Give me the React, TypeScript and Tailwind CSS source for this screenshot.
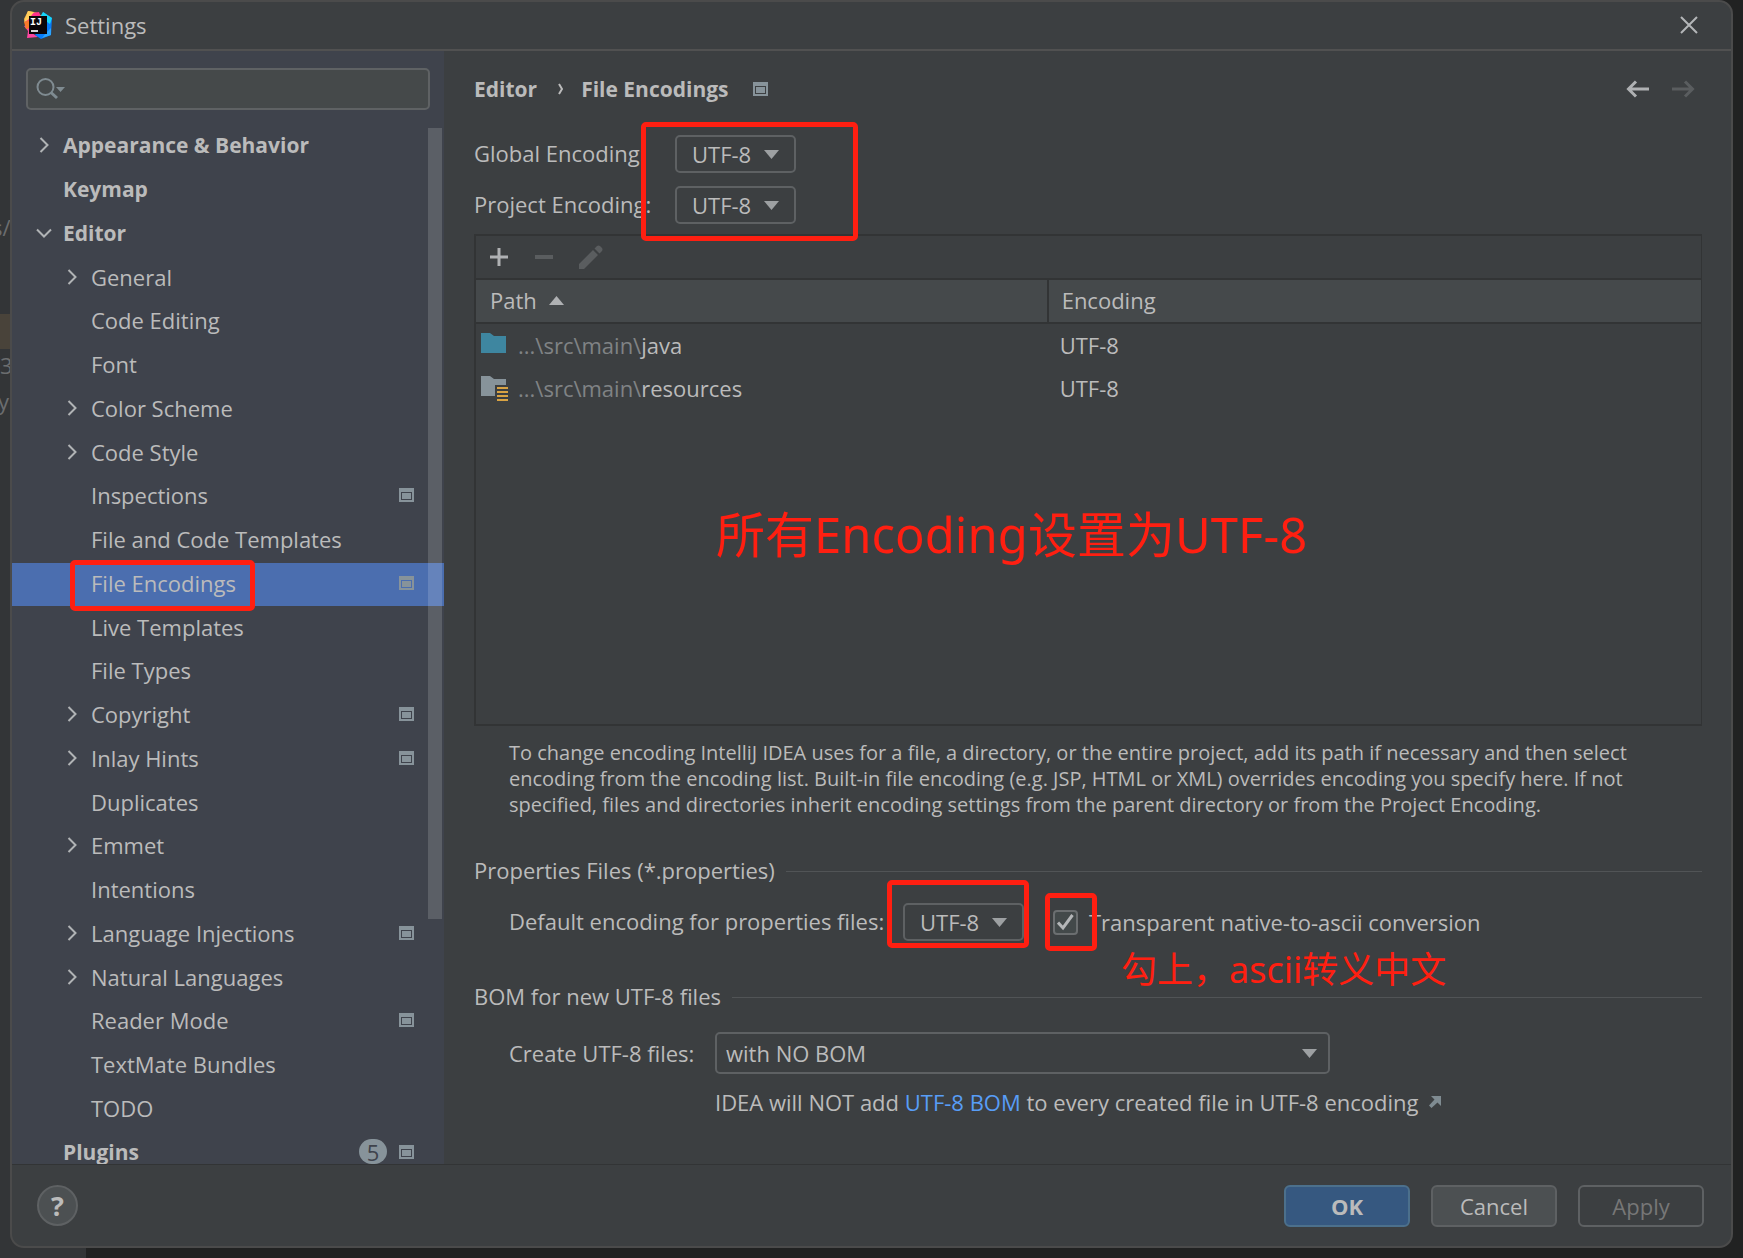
import { useState, type ReactNode } from "react";

type TreeItem = {
  label: string;
  depth: 0 | 1;
  state?: "open" | "closed";
  project?: boolean;
  badge?: string;
};

const TREE: TreeItem[] = [
  { label: "Appearance & Behavior", depth: 0, state: "closed" },
  { label: "Keymap", depth: 0 },
  { label: "Editor", depth: 0, state: "open" },
  { label: "General", depth: 1, state: "closed" },
  { label: "Code Editing", depth: 1 },
  { label: "Font", depth: 1 },
  { label: "Color Scheme", depth: 1, state: "closed" },
  { label: "Code Style", depth: 1, state: "closed" },
  { label: "Inspections", depth: 1, project: true },
  { label: "File and Code Templates", depth: 1 },
  { label: "File Encodings", depth: 1, project: true },
  { label: "Live Templates", depth: 1 },
  { label: "File Types", depth: 1 },
  { label: "Copyright", depth: 1, state: "closed", project: true },
  { label: "Inlay Hints", depth: 1, state: "closed", project: true },
  { label: "Duplicates", depth: 1 },
  { label: "Emmet", depth: 1, state: "closed" },
  { label: "Intentions", depth: 1 },
  { label: "Language Injections", depth: 1, state: "closed", project: true },
  { label: "Natural Languages", depth: 1, state: "closed" },
  { label: "Reader Mode", depth: 1, project: true },
  { label: "TextMate Bundles", depth: 1 },
  { label: "TODO", depth: 1 },
  { label: "Plugins", depth: 0, project: true, badge: "5" },
];

function IdeaLogo() {
  return (
    <svg width="28" height="28" viewBox="0 0 28 28" aria-hidden="true">
      <path d="M4 0 L14 2 L22 9 L8 20 L1 12 L0 8 Z" fill="#fdb94a" />
      <path d="M8 2 L15 1 L17 6 L6 12 L1 11 Z" fill="#ff318c" />
      <path d="M4 0 L10 1 L4 9 L0 11 Z" fill="#ffce5c" />
      <path d="M0 15 L6 13 L8 22 L14 26 L3 27 L4 20 Z" fill="#ff45a0" />
      <path d="M0 11 L6 9 L6 17 L2 18 Z" fill="#f97a2a" />
      <path d="M19 1 L28 7 L27 24 L17 28 L11 24 L18 14 Z" fill="#087cfa" />
      <path d="M19 1 L28 7 L26 13 L16 6 Z" fill="#18d6f5" />
      <path d="M22 22 L27 17 L27 24 L18 27 Z" fill="#2aa4ff" />
      <rect x="5" y="5" width="18" height="18" fill="#0a0609" />
      <text x="6" y="14" fontFamily="Liberation Mono, monospace" fontWeight="700" fontSize="10" fill="#fff">IJ</text>
      <rect x="7" y="19" width="7" height="2" fill="#d8d8d8" />
    </svg>
  );
}

function ProjectIcon() {
  return (
    <svg width="15" height="14" viewBox="0 0 15 14" aria-hidden="true" shapeRendering="crispEdges" className="shrink-0">
      <path d="M0 0H15V14H0ZM2 4V12H13V4Z" fill="#87939a" fillRule="evenodd" />
      <rect x="3" y="5" width="9" height="6" fill="#87939a" />
    </svg>
  );
}

function Chevron({ open }: { open: boolean }) {
  return open ? (
    <svg width="16" height="16" viewBox="0 0 16 16" fill="none" stroke="#b0b3b5" strokeWidth="2" aria-hidden="true">
      <path d="M1 4.5 L8 11.5 L15 4.5" />
    </svg>
  ) : (
    <svg width="16" height="16" viewBox="0 0 16 16" fill="none" stroke="#b0b3b5" strokeWidth="2" aria-hidden="true">
      <path d="M4.500 1 L11.500 8 L4.500 15" />
    </svg>
  );
}

function Triangle({ className }: { className: string }) {
  return (
    <svg width="15" height="9" viewBox="0 0 15 9" aria-hidden="true" className={className}>
      <path d="M0 0H15L7.5 9Z" fill="#9da0a2" />
    </svg>
  );
}

function EncodingSelect({ id }: { id: string }) {
  return (
    <div className="relative">
      <select
        id={id}
        className="block h-[38px] w-[121px] appearance-none rounded-[5px] border-2 border-[#5e6163] bg-[#3c3f41] pl-[15px] outline-none"
      >
        <option>UTF-8</option>
      </select>
      <Triangle className="pointer-events-none absolute top-[15px] right-[17px]" />
    </div>
  );
}

function RedBox({ className }: { className: string }) {
  return <div aria-hidden="true" className={`pointer-events-none absolute z-10 rounded-[5px] border-[5px] border-[#ff1f11] ${className}`} />;
}

function SectionTitle({ children, className }: { children: ReactNode; className: string }) {
  return (
    <div className={`flex items-center gap-[11px] ${className}`}>
      <h2 className="-my-px pb-[2px]">{children}</h2>
      <div className="h-px flex-1 bg-[#515456]" />
    </div>
  );
}

function Folder({ resources }: { resources?: boolean }) {
  return (
    <svg width="28" height="26" viewBox="0 0 28 26" aria-hidden="true" className="shrink-0">
      <path d="M0 1H9L13 4H25V21H0Z" fill={resources ? "#87939a" : "#3e86a0"} />
      {resources && (
        <g shapeRendering="crispEdges">
          <rect x="14" y="10" width="14" height="16" fill="#3c3f41" />
          <path d="M16 12H27V14H16ZM16 16H27V18H16ZM16 20H27V22H16ZM16 24H27V26H16Z" fill="#d9a343" />
        </g>
      )}
    </svg>
  );
}

function Sidebar() {
  const [selected, setSelected] = useState("File Encodings");
  return (
    <aside className="relative flex w-[432px] shrink-0 flex-col overflow-hidden bg-[#3f434c]">
      <div className="relative mx-[14px] mt-[17px] mb-[15px]">
        <input
          type="text"
          aria-label="Search settings"
          className="block h-[42px] w-full rounded-[5px] border-2 border-[#5f6264] bg-[#45494a] pl-10 outline-none"
        />
        <svg width="30" height="24" viewBox="0 0 30 24" fill="none" aria-hidden="true" className="pointer-events-none absolute top-[9px] left-[10px]">
          <circle cx="9.500" cy="10" r="8" stroke="#7f8b91" strokeWidth="2" />
          <path d="M15 15.500 L21 21" stroke="#7f8b91" strokeWidth="3" />
          <path d="M20 10H29L24.500 15Z" fill="#7f8b91" />
        </svg>
      </div>
      <nav aria-label="Settings sections" className="min-h-0 flex-1 overflow-hidden">
        <ul className="grid h-[1050px] auto-rows-fr">
          {TREE.map((item) => (
            <li key={item.label} className="relative flex">
              <button
                type="button"
                onClick={() => setSelected(item.label)}
                className={`flex w-full items-center pr-[30px] pb-[3px] text-left ${
                  item.depth === 0 ? "pl-[24px] text-[21px] font-bold" : "pl-[52px]"
                } ${item.label === selected ? "bg-[#4b6eaf]" : ""}`}
              >
                <span className="w-[27px]">{item.state && <Chevron open={item.state === "open"} />}</span>
                <span className="flex-1">{item.label}</span>
                {item.badge && (
                  <span className="mr-[12px] flex h-[25px] w-[28px] items-center justify-center rounded-full bg-[#87939a] text-[22px] font-normal text-[#3f434c]">
                    {item.badge}
                  </span>
                )}
                {item.project && <ProjectIcon />}
              </button>
              {item.label === "File Encodings" && <RedBox className="-top-[3px] -bottom-[5px] left-[58px] w-[185px]" />}
            </li>
          ))}
        </ul>
      </nav>
      <div aria-hidden="true" className="absolute top-[77px] right-[2px] h-[791px] w-[14px] bg-white/15" />
    </aside>
  );
}

function PathTable() {
  return (
    <section className="relative flex min-h-0 flex-1 flex-col border-2 border-r border-[#323435]">
      <div className="flex h-[44px] shrink-0 items-center border-b-2 border-[#323435] pl-[14px]">
        <button type="button" aria-label="Add">
          <svg width="18" height="18" viewBox="0 0 18 18" aria-hidden="true">
            <path d="M7.500 0H10.500V7.500H18V10.500H10.500V18H7.500V10.500H0V7.500H7.500Z" fill="#afb1b3" />
          </svg>
        </button>
        <button type="button" aria-label="Remove" disabled className="ml-[27px]">
          <svg width="18" height="18" viewBox="0 0 18 18" aria-hidden="true">
            <rect y="7" width="18" height="4" fill="#5a5d5f" />
          </svg>
        </button>
        <button type="button" aria-label="Edit" disabled className="ml-[26px]">
          <svg width="24" height="24" viewBox="0 0 24 24" aria-hidden="true">
            <path d="M0 19L14 5L19 10L5 24H0ZM15.500 3.500L18 1Q19.500 0 21 1L23 3Q24 4.500 23 6L20.500 8.500Z" fill="#5a5d5f" />
          </svg>
        </button>
      </div>
      <table className="w-full table-fixed border-collapse text-left">
        <colgroup>
          <col className="w-7/15" />
          <col />
        </colgroup>
        <thead>
          <tr className="h-[43px] border-b-2 border-[#323435] bg-[#45494b]">
            <th scope="col" className="pb-[2px] pl-[14px] font-normal">
              <span className="flex items-center gap-[12px]">
                Path
                <svg width="15" height="9" viewBox="0 0 15 9" aria-hidden="true">
                  <path d="M0 9H15L7.500 0Z" fill="#afb1b3" />
                </svg>
              </span>
            </th>
            <th scope="col" className="border-l-2 border-[#323435] pb-[2px] pl-[13px] font-normal">Encoding</th>
          </tr>
        </thead>
        <tbody>
          {["java", "resources"].map((dir) => (
            <tr key={dir} className="h-[44px]">
              <td className="pb-[2px] pl-[5px]">
                <span className="flex items-center gap-[9px]">
                  <Folder resources={dir === "resources"} />
                  <span>
                    <span className="text-[#808385]">...\src\main\</span>
                    {dir}
                  </span>
                </span>
              </td>
              <td className="pb-[2px] pl-[12px]">UTF-8</td>
            </tr>
          ))}
        </tbody>
      </table>
      <p className="absolute top-[258px] left-[240px] font-['Noto_Sans','Noto_Sans_CJK_SC',sans-serif] text-[49px] leading-[80px] whitespace-nowrap text-[#ff1f11]">
        所有Encoding设置为UTF-8
      </p>
    </section>
  );
}

function Content() {
  const [ascii, setAscii] = useState(true);
  return (
    <main className="flex min-w-0 flex-1 flex-col pr-[29px] pl-[30px]">
      <header className="flex h-[76px] shrink-0 items-center text-[21px] font-bold">
        <span>Editor</span>
        <svg width="6" height="12" viewBox="0 0 6 12" fill="none" stroke="#bbb" strokeWidth="2" aria-hidden="true" className="mr-[17px] ml-[21px]">
          <path d="M1 1 L4 6 L1 11" />
        </svg>
        <h1>File Encodings</h1>
        <span className="ml-[24px]">
          <ProjectIcon />
        </span>
        <div className="ml-auto flex gap-[23px] pr-[7px]">
          <button type="button" aria-label="Back">
            <svg width="23" height="18" viewBox="0 0 23 18" fill="none" stroke="#afb1b3" strokeWidth="3" aria-hidden="true">
              <path d="M23 9H2M10 1.500L2.500 9L10 16.500" />
            </svg>
          </button>
          <button type="button" aria-label="Forward" disabled>
            <svg width="23" height="18" viewBox="0 0 23 18" fill="none" stroke="#5a5d5f" strokeWidth="3" aria-hidden="true">
              <path d="M0 9H21M13 1.500L20.500 9L13 16.500" />
            </svg>
          </button>
        </div>
      </header>

      <div className="relative mt-[8px] grid w-fit shrink-0 grid-cols-[201px_auto] items-center gap-y-[13px]">
        <label htmlFor="global-encoding" className="pb-[3px]">Global Encoding:</label>
        <EncodingSelect id="global-encoding" />
        <label htmlFor="project-encoding" className="pb-[3px]">Project Encoding:</label>
        <EncodingSelect id="project-encoding" />
        <RedBox className="-top-[13px] -right-[62px] -bottom-[17px] left-[167px]" />
      </div>

      <div className="mt-[10px] flex min-h-0 flex-1 flex-col">
        <PathTable />
      </div>

      <p className="mt-[14px] mb-px max-w-[1170px] pl-[35px] text-[20px] leading-[26px]">
        To change encoding IntelliJ IDEA uses for a file, a directory, or the entire project, add its path if necessary and then select
        encoding from the encoding list. Built-in file encoding (e.g. JSP, HTML or XML) overrides encoding you specify here. If not
        specified, files and directories inherit encoding settings from the parent directory or from the Project Encoding.
      </p>

      <SectionTitle className="mt-[37px]">Properties Files (*.properties)</SectionTitle>
      <div className="mt-[17px] flex items-center pl-[35px]">
        <label htmlFor="properties-encoding" className="w-[394px] pb-[2px] whitespace-nowrap">
          Default encoding for properties files:
        </label>
        <div className="relative">
          <EncodingSelect id="properties-encoding" />
          <RedBox className="-top-[23px] -right-[5px] -bottom-[7px] -left-[16px]" />
        </div>
        <div className="relative ml-[29px] flex items-center">
          <span className="relative">
            <input
              id="native-to-ascii"
              type="checkbox"
              checked={ascii}
              onChange={(event) => setAscii(event.target.checked)}
              className="block size-[25px] appearance-none rounded-[4px] border-2 border-[#6b6e70] bg-[#43494a]"
            />
            {ascii && (
              <svg width="17" height="17" viewBox="0 0 17 17" fill="none" stroke="#b4b6b8" strokeWidth="3" aria-hidden="true" className="pointer-events-none absolute top-[4px] left-[4px]">
                <path d="M1 8.500L6 14L15.500 1" />
              </svg>
            )}
            <RedBox className="-top-[17px] -bottom-[16px] -left-[8px] w-[52px]" />
          </span>
          <label htmlFor="native-to-ascii" className="ml-[11px] whitespace-nowrap">
            Transparent native-to-ascii conversion
          </label>
          <span className="absolute top-[37px] left-[68px] font-['Noto_Sans','Noto_Sans_CJK_SC',sans-serif] text-[36px] leading-[52px] whitespace-nowrap text-[#ff1f11]">
            勾上，ascii转义中文
          </span>
        </div>
      </div>

      <SectionTitle className="mt-[41px]">BOM for new UTF-8 files</SectionTitle>
      <div className="mt-[20px] mb-[47px] grid grid-cols-[206px_1fr] items-center gap-y-[13px] pl-[35px]">
        <label htmlFor="bom">Create UTF-8 files:</label>
        <div className="relative w-[615px]">
          <select
            id="bom"
            className="block h-[42px] w-full appearance-none rounded-[5px] border-2 border-[#5e6163] bg-[#3c3f41] pl-[9px] outline-none"
          >
            <option>with NO BOM</option>
          </select>
          <Triangle className="pointer-events-none absolute top-[17px] right-[13px]" />
        </div>
        <p className="col-start-2 flex items-center whitespace-nowrap">
          <span>
            IDEA will NOT add{" "}
            <a href="#bom" className="text-[#589df6]">
              UTF-8 BOM
            </a>{" "}
            to every created file in UTF-8 encoding
          </span>
          <svg width="12" height="12" viewBox="0 0 12 12" aria-hidden="true" className="ml-[11px]">
            <path d="M2 0H12V10L8.500 6.500L2.500 12L0 9.500L5.500 3.500Z" fill="#7f8b91" />
          </svg>
        </p>
      </div>
    </main>
  );
}

export default function App() {
  return (
    <div className="relative flex h-screen overflow-hidden bg-[#212222] px-[10px] pb-[10px] font-['Open_Sans','Noto_Sans_CJK_SC',sans-serif] text-[22px] leading-[30px] text-[#bbbbbb]">
      <div aria-hidden="true" className="absolute inset-y-0 left-0 w-[86px] overflow-hidden bg-[#333537] text-[#6b6d6f]">
        <div className="absolute top-[314px] h-[35px] w-full bg-[#49433a]" />
        <span className="absolute top-[212px] -left-[8px]">s/.</span>
        <span className="absolute top-[350px] -left-[8px]">/3</span>
        <span className="absolute top-[386px] -left-[2px]">y</span>
      </div>

      <div className="relative flex min-w-0 flex-1 flex-col overflow-hidden rounded-[14px] border-2 border-[#4b4b4b] bg-[#3c3f41]">
        <div className="flex h-[49px] shrink-0 items-center border-b-2 border-[#515151] pr-[33px] pb-[2px] pl-[12px]">
          <IdeaLogo />
          <span className="ml-[13px]">Settings</span>
          <button type="button" aria-label="Close" className="ml-auto">
            <svg width="18" height="18" viewBox="0 0 18 18" fill="none" stroke="#b4b6b8" strokeWidth="2" aria-hidden="true">
              <path d="M1 1L17 17M17 1L1 17" />
            </svg>
          </button>
        </div>

        <div className="flex min-h-0 flex-1">
          <Sidebar />
          <Content />
        </div>

        <footer className="flex h-[82px] shrink-0 items-center gap-[21px] border-t border-[#323435] pr-[27px] pl-[25px]">
          <button
            type="button"
            aria-label="Help"
            className="mr-auto flex size-[41px] items-center justify-center rounded-full border-2 border-[#5e6163] bg-[#4c5052] text-[27px] font-bold"
          >
            ?
          </button>
          <button type="button" className="h-[42px] w-[126px] rounded-[6px] border-2 border-[#4c708c] bg-[#365880] font-bold">
            OK
          </button>
          <button type="button" className="h-[42px] w-[126px] rounded-[6px] border-2 border-[#5e6163] bg-[#4c5052]">
            Cancel
          </button>
          <button type="button" disabled className="h-[42px] w-[126px] rounded-[6px] border-2 border-[#5e6163] text-[#777777]">
            Apply
          </button>
        </footer>
      </div>
    </div>
  );
}
